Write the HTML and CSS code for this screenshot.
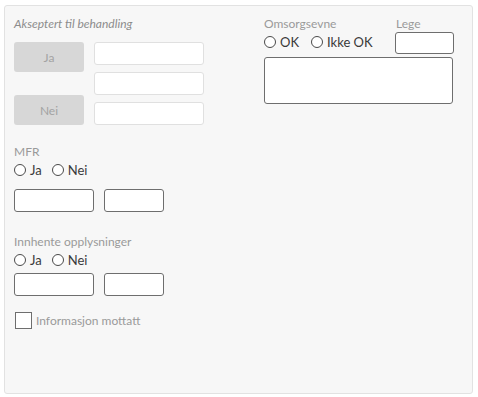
FILE: index.html
```html
<!DOCTYPE html>
<html lang="no">
<head>
    <meta charset="UTF-8">
    <title>Behandling</title>
    <link rel="stylesheet" href="styles.css">
</head>
<body>
    <div class="panel">
        <div class="col-left">
            <div class="caption">Akseptert til behandling</div>
            <div class="accept">
                <div class="accept-buttons">
                    <button class="btn">Ja</button>
                    <button class="btn">Nei</button>
                </div>
                <div class="accept-inputs">
                    <input class="field field-light" type="text">
                    <input class="field field-light" type="text">
                    <input class="field field-light" type="text">
                </div>
            </div>

            <div class="group group-mfr">
                <div class="label">MFR</div>
                <div class="radios">
                    <label class="radio"><span class="dot"></span>Ja</label>
                    <label class="radio"><span class="dot"></span>Nei</label>
                </div>
                <div class="pair">
                    <input class="field wide" type="text">
                    <input class="field narrow" type="text">
                </div>
            </div>

            <div class="group group-info">
                <div class="label">Innhente opplysninger</div>
                <div class="radios">
                    <label class="radio"><span class="dot"></span>Ja</label>
                    <label class="radio"><span class="dot"></span>Nei</label>
                </div>
                <div class="pair pair-tight">
                    <input class="field wide" type="text">
                    <input class="field narrow" type="text">
                </div>
            </div>

            <label class="check"><span class="box"></span>Informasjon mottatt</label>
        </div>

        <div class="col-right">
            <div class="care-row">
                <div class="care">
                    <div class="label">Omsorgsevne</div>
                    <div class="radios">
                        <label class="radio"><span class="dot"></span>OK</label>
                        <label class="radio"><span class="dot"></span>Ikke OK</label>
                    </div>
                </div>
                <div class="doctor">
                    <div class="label">Lege</div>
                    <input class="field doctor-field" type="text">
                </div>
            </div>
            <textarea class="field notes"></textarea>
        </div>
    </div>
</body>
</html>
```

FILE: styles.css
```css
* {
    box-sizing: border-box;
}
body {
    margin: 0;
    font-family: Lato, "Open Sans", sans-serif;
    background: #ffffff;
}
.panel {
    margin: 5px 5px 0 4px;
    height: 389px;
    background: #f7f7f7;
    border: 1px solid #e2e2e2;
    border-radius: 3px;
    padding: 10px 0 0 9px;
    display: grid;
    grid-template-columns: 190px 190px;
    column-gap: 60px;
    align-items: start;
}
.caption {
    font-size: 12px;
    font-style: italic;
    color: #8c8c8c;
    line-height: 16px;
    height: 16px;
}
.label {
    font-size: 12px;
    color: #9a9a9a;
    line-height: 14px;
}
.accept {
    display: flex;
    gap: 10px;
    margin-top: 10px;
}
.accept-buttons {
    display: flex;
    flex-direction: column;
    justify-content: space-between;
    height: 83px;
}
.btn {
    width: 70px;
    height: 30px;
    border: none;
    border-radius: 3px;
    background: #d7d7d7;
    color: #a3a3a3;
    font-family: inherit;
    font-size: 12px;
    padding: 0;
}
.accept-inputs {
    display: flex;
    flex-direction: column;
    gap: 7px;
}
.field {
    display: block;
    height: 23px;
    background: #ffffff;
    border: 1px solid #6e6e6e;
    border-radius: 3px;
    padding: 0;
    margin: 0;
    font-family: inherit;
}
.field-light {
    width: 110px;
    border-color: #e0e0e0;
}
.radios {
    display: flex;
    gap: 10px;
    margin-top: 3px;
}
.radio {
    display: flex;
    align-items: center;
    gap: 4px;
    font-size: 13px;
    color: #3a3a3a;
    line-height: 16px;
}
.dot {
    width: 12px;
    height: 12px;
    border: 1px solid #4a4a4a;
    border-radius: 50%;
    background: #ffffff;
}
.group-mfr {
    margin-top: 20px;
}
.group-info {
    margin-top: 23px;
}
.pair {
    display: flex;
    gap: 10px;
    margin-top: 11px;
}
.pair-tight {
    margin-top: 5px;
}
.wide {
    width: 80px;
}
.narrow {
    width: 60px;
}
.check {
    display: flex;
    align-items: center;
    gap: 4px;
    margin-top: 16px;
    font-size: 12px;
    color: #9a9a9a;
}
.box {
    width: 17px;
    height: 17px;
    border: 1px solid #6e6e6e;
    background: #ffffff;
    margin-left: 1px;
}
.col-right {
    padding-top: 1px;
}
.care-row {
    display: flex;
    justify-content: space-between;
}
.care .radios {
    margin-top: 3px;
    gap: 12px;
}
.doctor .label {
    padding-left: 1px;
}
.doctor-field {
    width: 59px;
    height: 22px;
    margin-top: 1px;
}
.notes {
    width: 189px;
    height: 47px;
    margin-top: 3px;
    resize: none;
}
```
